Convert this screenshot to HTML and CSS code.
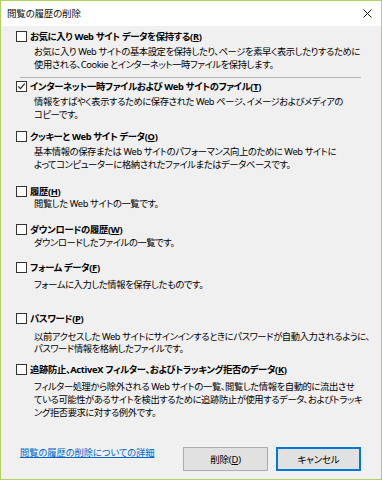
FILE: index.html
```html
<!DOCTYPE html>
<html lang="ja">
<head>
<meta charset="utf-8">
<title>閲覧の履歴の削除</title>
<link rel="stylesheet" href="styles.css">
</head>
<body>
<div class="titlebar">
  <span class="title">閲覧の履歴の削除</span>
  <svg class="close" width="9" height="9" viewBox="0 0 9 9"><path d="M0.5 0.5 L8.5 8.5 M8.5 0.5 L0.5 8.5" stroke="#111" stroke-width="1" fill="none"/></svg>
</div>
<div class="content">
  <div class="opt o1">
    <div class="row"><svg class="cb" width="11" height="11" viewBox="0 0 11 11"><rect x="0.5" y="0.5" width="10" height="10" fill="#fff" stroke="#333"/></svg><span class="label">お気に入り Web サイト データを保持する(<u>R</u>)</span></div>
    <div class="desc d3">お気に入り Web サイトの基本設定を保持したり、ページを素早く表示したりするために<br>使用される、Cookie とインターネット一時ファイルを保持します。</div>
  </div>
  <div class="sep"></div>
  <div class="opt o2">
    <div class="row"><svg class="cb" width="11" height="11" viewBox="0 0 11 11"><rect x="0.5" y="0.5" width="10" height="10" fill="#fff" stroke="#333"/><path d="M2.2 5.3 L4.4 7.6 L8.8 2.6" stroke="#222" stroke-width="1.1" fill="none"/></svg><span class="label">インターネット一時ファイルおよび Web サイトのファイル(<u>T</u>)</span></div>
    <div class="desc d3">情報をすばやく表示するために保存された Web ページ、イメージおよびメディアの<br>コピーです。</div>
  </div>
  <div class="opt o3">
    <div class="row"><svg class="cb" width="11" height="11" viewBox="0 0 11 11"><rect x="0.5" y="0.5" width="10" height="10" fill="#fff" stroke="#333"/></svg><span class="label">クッキーと Web サイト データ(<u>O</u>)</span></div>
    <div class="desc d3">基本情報の保存または Web サイトのパフォーマンス向上のために Web サイトに<br>よってコンピューターに格納されたファイルまたはデータベースです。</div>
  </div>
  <div class="opt o4">
    <div class="row"><svg class="cb" width="11" height="11" viewBox="0 0 11 11"><rect x="0.5" y="0.5" width="10" height="10" fill="#fff" stroke="#333"/></svg><span class="label">履歴(<u>H</u>)</span></div>
    <div class="desc d0">閲覧した Web サイトの一覧です。</div>
  </div>
  <div class="opt o5">
    <div class="row"><svg class="cb" width="11" height="11" viewBox="0 0 11 11"><rect x="0.5" y="0.5" width="10" height="10" fill="#fff" stroke="#333"/></svg><span class="label">ダウンロードの履歴(<u>W</u>)</span></div>
    <div class="desc d1">ダウンロードしたファイルの一覧です。</div>
  </div>
  <div class="opt o6">
    <div class="row"><svg class="cb" width="11" height="11" viewBox="0 0 11 11"><rect x="0.5" y="0.5" width="10" height="10" fill="#fff" stroke="#333"/></svg><span class="label">フォーム データ(<u>F</u>)</span></div>
    <div class="desc d5">フォームに入力した情報を保存したものです。</div>
  </div>
  <div class="opt o7">
    <div class="row"><svg class="cb" width="11" height="11" viewBox="0 0 11 11"><rect x="0.5" y="0.5" width="10" height="10" fill="#fff" stroke="#333"/></svg><span class="label">パスワード(<u>P</u>)</span></div>
    <div class="desc d6">以前アクセスした Web サイトにサインインするときにパスワードが自動入力されるように、<br>パスワード情報を格納したファイルです。</div>
  </div>
  <div class="opt o8">
    <div class="row"><svg class="cb" width="11" height="11" viewBox="0 0 11 11"><rect x="0.5" y="0.5" width="10" height="10" fill="#fff" stroke="#333"/></svg><span class="label">追跡防止、ActiveX フィルター、およびトラッキング拒否のデータ(<u>K</u>)</span></div>
    <div class="desc d4 wide">フィルター処理から除外される Web サイトの一覧、閲覧した情報を自動的に流出させ<br>ている可能性があるサイトを検出するために追跡防止が使用するデータ、およびトラッキ<br>ング拒否要求に対する例外です。</div>
  </div>
  <div class="footer">
    <a class="more" href="#">閲覧の履歴の削除についての詳細</a>
    <button class="btn">削除(<u>D</u>)</button>
    <button class="btn default">キャンセル</button>
  </div>
</div>
</body>
</html>
```

FILE: styles.css
```css
html, body {
  margin: 0;
  padding: 0;
}
body {
  width: 382px;
  height: 480px;
  box-sizing: border-box;
  border: 1px solid #b1cf62;
  display: flex;
  flex-direction: column;
  font-family: "Noto Sans", "Noto Sans CJK JP", sans-serif;
  font-size: 9.3px;
  letter-spacing: -0.4px;
  font-feature-settings: "palt";
  color: #000;
  overflow: hidden;
}
.titlebar {
  height: 25px;
  flex: none;
  background: #fff;
  display: flex;
  align-items: center;
  justify-content: space-between;
  padding: 0 9px 0 6px;
}
.title {
  font-size: 9.5px;
  line-height: 13px;
  letter-spacing: -0.2px;
  color: #111;
}
.close {
  display: block;
}
.content {
  flex: 1;
  background: #f0f0f0;
  display: flex;
  flex-direction: column;
}
.row {
  display: flex;
  align-items: center;
  height: 13px;
  padding-left: 15px;
  gap: 3px;
}
.cb {
  display: block;
  flex: none;
}
.label {
  font-weight: bold;
  line-height: 13px;
  letter-spacing: -0.32px;
  white-space: nowrap;
}
.desc {
  padding-left: 33px;
  line-height: 12.5px;
  white-space: nowrap;
}
.desc.wide {
  line-height: 13px;
}
.d0 { margin-top: 0; }
.d1 { margin-top: 1px; }
.d3 { margin-top: 3px; }
.d4 { margin-top: 4px; }
.d5 { margin-top: 5px; }
.d6 { margin-top: 6px; }
.o1 { margin-top: 4px; }
.sep {
  margin: 6px 0 0 19px;
  width: 341px;
  height: 0;
  border-top: 1px solid #b4b4b4;
}
.o2 { margin-top: 2px; }
.o3 { margin-top: 9px; }
.o4 { margin-top: 14px; }
.o5 { margin-top: 12px; }
.o6 { margin-top: 12px; }
.o7 { margin-top: 20px; }
.o8 { margin-top: 7px; }
.footer {
  margin-top: auto;
  margin-bottom: 8px;
  display: flex;
  align-items: flex-start;
  padding: 0 20px 0 19px;
  gap: 8px;
}
.more {
  margin-right: auto;
  margin-top: -1px;
  color: #0066cc;
  text-decoration: underline;
  line-height: 13px;
  letter-spacing: -0.1px;
  white-space: nowrap;
}
.btn {
  width: 85px;
  height: 24px;
  box-sizing: border-box;
  background: #e1e1e1;
  border: 1px solid #adadad;
  font-family: inherit;
  font-size: 9.5px;
  letter-spacing: -0.2px;
  font-feature-settings: "palt";
  color: #000;
  padding: 0;
  margin: 0;
}
.btn.default {
  border: 2px solid #0078d7;
}
```
